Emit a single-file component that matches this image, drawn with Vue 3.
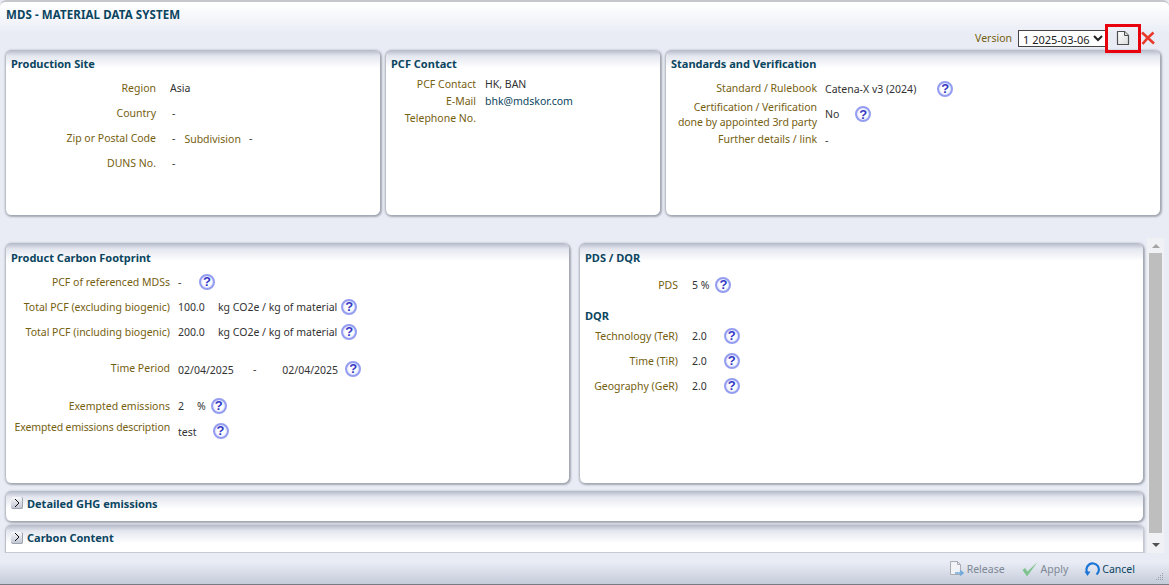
<script setup>
const sitePanel = [
  { label: 'Region', value: 'Asia' },
  { label: 'Country', value: '-' },
  { label: 'Zip or Postal Code', value: '-', extraLabel: 'Subdivision', extraValue: '-' },
  { label: 'DUNS No.', value: '-' }
]
const pcfRows = [
  { label: 'PCF of referenced MDSs', value: '-', w: 21 },
  { label: 'Total PCF (excluding biogenic)', value: '100.0', w: 40, unit: 'kg CO2e / kg of material' },
  { label: 'Total PCF (including biogenic)', value: '200.0', w: 40, unit: 'kg CO2e / kg of material' }
]
const dqr = [
  { label: 'Technology (TeR)', value: '2.0' },
  { label: 'Time (TiR)', value: '2.0' },
  { label: 'Geography (GeR)', value: '2.0' }
]
const gripDots = [[6,0],[4,2],[6,2],[2,4],[4,4],[6,4],[0,6],[2,6],[4,6],[6,6]]
</script>

<template>
  <div class="window">
    <header class="head">
      <div class="title">MDS - MATERIAL DATA SYSTEM</div>
      <div class="toolbar">
        <span class="lbl">Version</span>
        <select class="ver"><option>1 2025-03-06</option></select>
        <span class="docbox">
          <svg width="14" height="16" viewBox="0 0 14 16"><defs><linearGradient id="dg" x1="0" y1="0" x2="1" y2="1"><stop offset="0" stop-color="#ffffff"/><stop offset="1" stop-color="#dcdcdc"/></linearGradient></defs><path d="M1.500 1.500h7l4 4v9h-11z" fill="url(#dg)" stroke="#4f4f4f" stroke-width="1.200" stroke-linejoin="round"/><path d="M8.500 1.500v4h4" fill="#d8d8d8" stroke="#4f4f4f" stroke-linejoin="round"/></svg>
        </span>
        <svg class="closex" width="14" height="14" viewBox="0 0 14 14"><path d="M1 1.500C5 5 9 9 13 12.500M12.500 1.500C9 4.500 5 8.500 1.500 13" stroke="#e8392a" stroke-width="2.600" fill="none"/></svg>
      </div>
    </header>

    <section class="toprow">
      <div class="panel p1">
        <h3>Production Site</h3>
        <div class="rows site">
          <div v-for="r in sitePanel" :key="r.label" class="row">
            <span class="lbl key">{{ r.label }}</span>
            <span class="val" :class="{ dash: r.value === '-' }">{{ r.value }}</span>
            <template v-if="r.extraLabel">
              <span class="lbl sub">{{ r.extraLabel }}</span>
              <span class="val sv">{{ r.extraValue }}</span>
            </template>
          </div>
        </div>
      </div>
      <div class="panel p2">
        <h3>PCF Contact</h3>
        <div class="contact">
          <div class="crow c1"><span class="lbl key">PCF Contact</span><span class="val">HK, BAN</span></div>
          <div class="crow c2"><span class="lbl key">E-Mail</span><span class="val mail">bhk@mdskor.com</span></div>
          <div class="crow"><span class="lbl key">Telephone No.</span></div>
        </div>
      </div>
      <div class="panel p3">
        <h3>Standards and Verification</h3>
        <div class="std">
          <div class="srow r1"><span class="lbl key">Standard / Rulebook</span><span class="val">Catena-X v3 (2024)</span><span class="help h1">?</span></div>
          <div class="srow r2"><span class="lbl key two">Certification / Verification<br>done by appointed 3rd party</span><span class="val">No</span><span class="help h2">?</span></div>
          <div class="srow r3"><span class="lbl key">Further details / link</span><span class="val">-</span></div>
        </div>
      </div>
    </section>

    <section class="scroller">
      <div class="content">
        <div class="midrow">
          <div class="panel pcf">
            <h3>Product Carbon Footprint</h3>
            <div class="pcfrows">
              <div v-for="r in pcfRows" :key="r.label" class="prow">
                <span class="lbl key">{{ r.label }}</span>
                <span class="val pv" :style="{ width: r.w + 'px' }">{{ r.value }}</span>
                <span v-if="r.unit" class="val unit">{{ r.unit }}</span>
                <span class="help">?</span>
              </div>
              <div class="prow period">
                <span class="lbl key">Time Period</span>
                <span class="val date">02/04/2025</span>
                <span class="val to">-</span>
                <span class="val date">02/04/2025</span>
                <span class="help">?</span>
              </div>
              <div class="prow exempt">
                <span class="lbl key">Exempted emissions</span>
                <span class="val pct">2</span>
                <span class="val">%</span>
                <span class="help">?</span>
              </div>
              <div class="prow desc">
                <span class="lbl key">Exempted emissions description</span>
                <span class="val dtext">test</span>
                <span class="help">?</span>
              </div>
            </div>
          </div>
          <div class="panel pds">
            <h3>PDS / DQR</h3>
            <div class="pdsrow">
              <span class="lbl key">PDS</span><span class="val">5 %</span><span class="help">?</span>
            </div>
            <h3 class="dqr">DQR</h3>
            <div v-for="r in dqr" :key="r.label" class="dqrrow">
              <span class="lbl key">{{ r.label }}</span><span class="val">{{ r.value }}</span><span class="help">?</span>
            </div>
          </div>
        </div>
        <div class="collapsed first">
          <span class="disclose"><svg width="8" height="10" viewBox="0 0 8 10"><path d="M2 1l4 4-4 4" fill="none" stroke="#111" stroke-width="1"/></svg></span>
          <span class="ctitle">Detailed GHG emissions</span>
        </div>
        <div class="collapsed second">
          <span class="disclose"><svg width="8" height="10" viewBox="0 0 8 10"><path d="M2 1l4 4-4 4" fill="none" stroke="#111" stroke-width="1"/></svg></span>
          <span class="ctitle">Carbon Content</span>
        </div>
      </div>
      <div class="scrollbar">
        <span class="arrow up"></span>
        <span class="thumb"></span>
        <span class="arrow down"></span>
      </div>
    </section>

    <footer class="foot">
      <span class="btn off">
        <svg width="15" height="17" viewBox="0 0 15 17"><path d="M1.500 1.500h7l3 3v10h-10z" fill="#f1f3f6" stroke="#a9acb3"/><path d="M8.500 1.500v3h3" fill="none" stroke="#a9acb3"/><path d="M6 13h7M11 10.500l3 2.500-3 2.500" fill="none" stroke="#6fa9dd" stroke-width="1.500"/></svg>
        Release
      </span>
      <span class="btn off apply">
        <svg width="16" height="16" viewBox="0 0 16 16"><path d="M0.500 9l4.500 6.500L15.500 1 5.500 10.500 3 7z" fill="#7fc48f"/></svg>
        Apply
      </span>
      <span class="btn cancel">
        <svg width="16" height="16" viewBox="0 0 16 16"><path d="M3.500 12A6.200 6.200 0 1 1 12.500 13.500" fill="none" stroke="#1c76d6" stroke-width="2.200"/><path d="M0.500 10.500h6l-3 4.500z" fill="#1c76d6"/></svg>
        Cancel
      </span>
      <svg class="grip" width="8" height="8" viewBox="0 0 8 8"><rect v-for="d in gripDots" :key="d.join()" :x="d[0]" :y="d[1]" width="1" height="1" fill="#9ba0aa"/></svg>
    </footer>
  </div>
</template>

<style>
html, body { margin: 0; padding: 0; background: #e9ecf5; overflow: hidden; }
</style>

<style scoped>
.window {
  width: 1169px; height: 585px; box-sizing: border-box; display: flex; flex-direction: column;
  border-top: 2px solid #c6c7cc; border-bottom: 1px solid #777b82; overflow: hidden;
  font-family: Tahoma, "Noto Sans", sans-serif; font-size: 10.5px; color: #333;
  background: linear-gradient(#ffffff 2px, #e9ecf5 32px);
  border-radius: 6px 6px 0 0;
}
.head { height: 48px; flex: none; padding: 0 6px; position: relative; z-index: 1; }
.title { font-weight: 700; color: #0b4560; line-height: 14px; padding-top: 6px; font-size: 11.5px; letter-spacing: .1px; }
.toolbar { display: flex; align-items: center; justify-content: flex-end; height: 30px; margin-top: 1px; padding-right: 8px; }
.lbl { color: #75600f; white-space: nowrap; }
.ver {
  width: 89px; height: 17px; margin-left: 6px; box-sizing: border-box; background: #fff; border: 1px solid #444;
  font: 11px "Noto Sans", sans-serif; color: #222; padding: 0; border-radius: 0;
}
.docbox { width: 36px; height: 29px; border: 3px solid #e8000d; box-sizing: border-box; display: flex; align-items: center; justify-content: center; margin-left: -2px; position: relative; }
.toprow { display: flex; gap: 5px; padding-left: 5px; height: 165px; flex: none; }
.panel {
  background: linear-gradient(#b4b9c8 0, #e4e7ef 6px, #fff 18px); border-radius: 6px; box-sizing: border-box;
  box-shadow: 1px 1px 2px 1px #a3a7b1; border-left: 1px solid #bcc0ca; position: relative;
}
.panel h3 { margin: 0; font-size: 11px; font-weight: 700; color: #0b4560; padding: 7px 0 0 5px; line-height: 14px; }
.p1 { width: 375px; }
.p2 { width: 275px; }
.p3 { width: 495px; }
.rows { margin-top: 4px; }
.row { height: 25px; display: flex; align-items: center; }
.site .key { width: 150px; text-align: right; }
.site .val { margin-left: 14px; margin-top: 1px; }
.site .val.dash { margin-left: 16px; margin-top: 0; }
.site .sub { margin-left: 9px; margin-top: 2px; }
.site .val.sv { margin-left: 8px; }
.contact { margin-top: 5px; }
.crow { height: 15px; display: flex; align-items: center; }
.c1 { height: 16px; }
.c2 { height: 18px; }
.contact .key { width: 90px; text-align: right; }
.contact .val { margin-left: 9px; }
.mail { color: #0b4560; }
.std { margin-top: 5px; }
.srow { display: flex; align-items: center; }
.std .key { width: 151px; text-align: right; line-height: 15px; }
.std .two { margin-top: 2px; letter-spacing: -.06px; }
.std .val { margin-left: 8px; }
.r1 { height: 25px; }
.r2 { height: 26px; }
.r3 { height: 25px; }
.help {
  width: 16px; height: 16px; border-radius: 50%; box-sizing: border-box; flex: none; display: inline-flex; align-items: center; justify-content: center;
  background: radial-gradient(circle, #ffffff 45%, #d4d7fb 85%); border: 2px solid #949df0; color: #3338c4;
  font: 700 13px "Liberation Sans", sans-serif;
}
.h1 { margin-left: 21px; }
.h2 { margin-left: 16px; }
.scroller { flex: 1; display: flex; padding-top: 28px; min-height: 0; }
.content { width: 1147px; padding-left: 5px; box-sizing: border-box; flex: none; }
.midrow { display: flex; gap: 10px; height: 240px; }
.pcf { width: 564px; }
.pds { width: 564px; padding-left: 1px; }
.pcf h3, .pds h3 { padding-top: 8px; }
.pds h3 { padding-left: 4px; }
.pcfrows { margin-top: 4px; }
.prow { display: flex; align-items: center; height: 25px; }
.pcf .key { width: 164px; text-align: right; }
.pcf .val { margin-left: 8px; }
.pcf .val.unit { margin-left: 0; white-space: nowrap; }
.pcf .help { margin-left: 4px; }
.prow:first-child .help { margin-left: 0; }
.period { margin-top: 12px; }
.period .key { margin-bottom: 1px; }
.period .val.date { margin-top: 3px; }
.period .val.to { margin-left: 19px; margin-right: 18px; }
.period .help { margin-left: 7px; }
.exempt { margin-top: 12px; }
.exempt .pct { margin-right: 5px; }
.exempt .help { margin-left: 5px; }
.desc { margin-top: 1px; }
.desc .key { margin-bottom: 10px; letter-spacing: -.13px; }
.desc .help { margin-left: 16px; margin-bottom: 2px; }
.pdsrow { display: flex; align-items: center; height: 25px; margin-top: 7px; }
.pdsrow .key, .dqrrow .key { width: 97px; text-align: right; }
.pdsrow .val, .dqrrow .val { margin-left: 14px; }
.pdsrow .help { margin-left: 6px; }
.pds h3.dqr { padding-top: 12px; }
.dqrrow { display: flex; align-items: center; height: 25px; }
.dqrrow .help { margin-left: 17px; }
.collapsed {
  width: 1138px; height: 30px; display: flex; align-items: center; padding: 0 0 6px 5px; box-sizing: border-box;
  background: linear-gradient(#b4b9c8 0, #e4e7ef 6px, #fff 18px); border-radius: 6px; box-shadow: 1px 1px 2px 1px #a3a7b1; border-left: 1px solid #bcc0ca;
}
.first { margin-top: 8px; }
.second { margin-top: 4px; height: 28px; padding-bottom: 2px; border-radius: 6px 6px 0 0; box-shadow: 1px 0 2px 1px #c3c6ce; border-bottom: 1px solid #c6c9d1; }
.disclose {
  width: 12px; height: 12px; display: flex; align-items: center; justify-content: center; border-radius: 2px; margin-right: 4px; box-sizing: border-box;
  background: linear-gradient(#f8f9fb, #c3c7d4); border-right: 1px solid #9ea3b0; border-bottom: 1px solid #9ea3b0;
}
.ctitle { font-weight: 700; color: #0b4560; font-size: 11px; }
.scrollbar { width: 17px; height: 315px; margin-top: -5px; background: #f0f1f4; display: flex; flex-direction: column; align-items: center; flex: none; }
.arrow { width: 0; height: 0; border-left: 4px solid transparent; border-right: 4px solid transparent; flex: none; }
.arrow.up { border-bottom: 4px solid #a3a3a3; margin: 6px 0 5px; }
.arrow.down { border-top: 4px solid #505050; margin: 10px 0 6px; }
.thumb { flex: 1; width: 13px; background: #bebebe; }
.foot {
  height: 31px; flex: none; display: flex; align-items: center; justify-content: flex-end; padding-right: 34px; position: relative;
  background: linear-gradient(#e9ecf5 30%, #c4cbd9); font-size: 10.5px;
}
.btn { display: flex; align-items: center; gap: 3px; }
.off { color: #7e8894; }
.apply { margin-left: 17px; }
.cancel { color: #0b4560; margin-left: 16px; gap: 2px; }
.grip { position: absolute; right: 5px; bottom: 3px; }
</style>
